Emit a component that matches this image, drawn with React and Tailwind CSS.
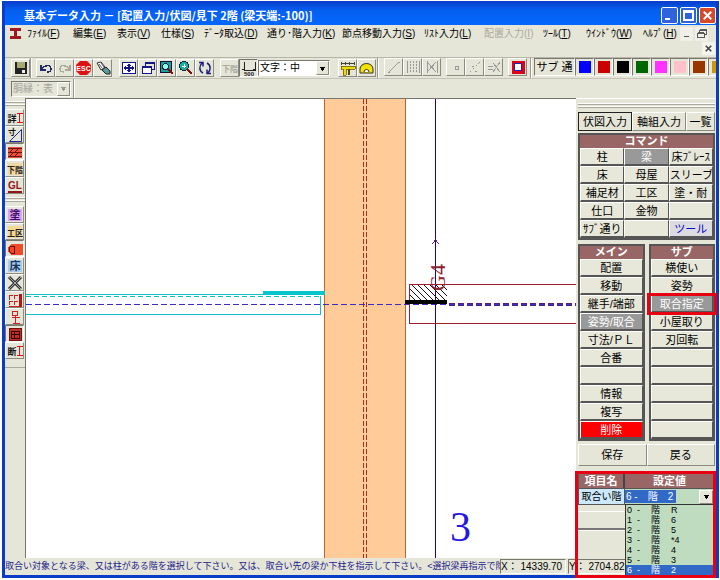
import { useState } from "react";
import clsx from "clsx";

const MENUS = [
  { label: "ﾌｧｲﾙ", hotkey: "F", width: "w-[46px]" },
  { label: "編集", hotkey: "E", width: "w-[44px]" },
  { label: "表示", hotkey: "V", width: "w-[44px]" },
  { label: "仕様", hotkey: "S", width: "w-[43px]" },
  { label: "ﾃﾞｰﾀ取込", hotkey: "D", width: "w-[63px]" },
  { label: "通り･階入力", hotkey: "K", width: "w-[75px]" },
  { label: "節点移動入力", hotkey: "S", width: "w-[82px]" },
  { label: "ﾘｽﾄ入力", hotkey: "L", width: "w-[60px]" },
  { label: "配置入力", hotkey: "I", width: "w-[59px]", disabled: true },
  { label: "ﾂｰﾙ", hotkey: "T", width: "w-[43px]" },
  { label: "ｳｲﾝﾄﾞｳ", hotkey: "W", width: "w-[57px]" },
  { label: "ﾍﾙﾌﾟ", hotkey: "H", width: "w-[43px]" },
];

const SWATCHES = [
  { name: "青", color: "bg-[#0000ff]" },
  { name: "赤", color: "bg-[#cc0000]" },
  { name: "黒", color: "bg-black" },
  { name: "緑", color: "bg-[#006600]" },
  { name: "紫", color: "bg-[#ff33ff]" },
  { name: "桃", color: "bg-[#ffc0cb]" },
  { name: "茶", color: "bg-[#993300]" },
  { name: "金", color: "bg-[#cc9900]" },
];

const COMMANDS = [
  "柱", "梁", "床ﾌﾞﾚｰｽ",
  "床", "母屋", "スリーブ",
  "補足材", "工区", "塗・耐",
  "仕口", "金物", "",
  "ｻﾌﾞ通り", "", "ツール",
];

const MAIN_ITEMS = ["配置", "移動", "継手/端部", "姿勢/取合", "寸法/ＰＬ", "合番", "", "情報", "複写", "削除"];
const SUB_ITEMS = ["横使い", "姿勢", "取合指定", "小屋取り", "刃回転", "", "", "", "", ""];

const FLOORS = ["R", "6", "5", "*4", "4", "3", "2"];

const RAISED = "border border-t-white border-l-white border-r-[#8a8a80] border-b-[#8a8a80]";
const SUNKEN = "border border-t-[#77776f] border-l-[#77776f] border-r-white border-b-white";

function Icon({ children, size = 16 }) {
  return (
    <svg width={size} height={size} viewBox="0 0 16 16" fill="none" shapeRendering="crispEdges" aria-hidden="true">
      {children}
    </svg>
  );
}

function ToolButton({ label, children, pressed, disabled }) {
  return (
    <button
      type="button"
      aria-label={label}
      disabled={disabled}
      className={clsx("flex h-[18px] w-[19px] shrink-0 items-center justify-center overflow-hidden", pressed ? SUNKEN : RAISED)}
    >
      {children}
    </button>
  );
}

function Separator() {
  return <div className="h-[20px] w-[2px] shrink-0 border-l border-[#9a9a90] border-r border-r-white" />;
}

function GlyphIcon({ text, color, fill, size = 11 }) {
  return (
    <Icon>
      {fill && <rect x="1" y="2" width="14" height="12" fill={fill} />}
      <text x="8" y="12" fontSize={size} fontWeight="700" textAnchor="middle" fill={color}>
        {text}
      </text>
    </Icon>
  );
}

function TitleBar() {
  return (
    <div className="flex h-6 shrink-0 items-center bg-linear-to-b from-[#0a3cc8] via-[#0560f0] via-40% to-[#0466ff] pl-[19px]">
      <h1 className="flex-1 whitespace-nowrap pt-1 font-['Noto_Sans_CJK_JP',sans-serif] text-[11px] font-bold leading-none text-white">
        基本データ入力 － [配置入力/伏図/見下 2階 (梁天端:-100)]
      </h1>
      <div className="flex gap-[2px] pt-1">
        <button type="button" aria-label="最小化" className="h-[17px] w-[17px] rounded-xs border border-white bg-[#2f62dd]">
          <Icon size={15}><path d="M3 11h6v2H3z" fill="#fff" /></Icon>
        </button>
        <button type="button" aria-label="最大化" className="h-[17px] w-[17px] rounded-xs border border-white bg-[#2f62dd]">
          <Icon size={15}><path d="M3 3h10v10H3zM3 4.5h10" stroke="#fff" strokeWidth="1.6" /></Icon>
        </button>
        <button type="button" aria-label="閉じる" className="h-[17px] w-[17px] rounded-xs border border-white bg-[#d8492a]">
          <svg width="15" height="15" viewBox="0 0 16 16" aria-hidden="true">
            <path d="M4 4l8 8M12 4l-8 8" stroke="#fff" strokeWidth="2" />
          </svg>
        </button>
      </div>
    </div>
  );
}

function MenuBar() {
  return (
    <div className="shrink-0 border-b border-[#b5b5a8]">
      <div className="flex h-[17px] items-center pl-1">
        <div className="w-[18px] shrink-0">
          <Icon size={13}>
            <path d="M1 1h14v4h-5v6h5v4H1v-4h5V5H1z" fill="#a01820" />
          </Icon>
        </div>
        <nav className="flex flex-1 overflow-hidden">
          {MENUS.map((menu) => (
            <button
              key={menu.label}
              type="button"
              disabled={menu.disabled}
              className={clsx("shrink-0 whitespace-nowrap text-left text-[10px] leading-[15px]", menu.width, menu.disabled && "text-[#aaaaa0]")}
            >
              {menu.label}(<u>{menu.hotkey}</u>)
            </button>
          ))}
        </nav>
        <div className="flex gap-[2px] pr-2">
          <button type="button" aria-label="子ウィンドウを最小化" className="flex h-[14px] w-[13px] items-center justify-center bg-[#f0f0e8]">
            <Icon size={12}><path d="M4 10h6v2H4z" fill="#555" /></Icon>
          </button>
          <button type="button" aria-label="元に戻す" className="flex h-[14px] w-[13px] items-center justify-center bg-[#f0f0e8]">
            <Icon size={12}><path d="M5 6V2h9v7h-3M5 3h9M2 6h9v7H2zM2 7h9" stroke="#555" strokeWidth="1.3" /></Icon>
          </button>
        </div>
      </div>
      <div className="flex h-[15px] justify-end pr-px">
        <button type="button" aria-label="子ウィンドウを閉じる" className="flex h-[13px] w-[13px] items-center justify-center bg-[#f4f4ee]">
          <svg width="11" height="11" viewBox="0 0 16 16" aria-hidden="true">
            <path d="M4 4l8 8M12 4l-8 8" stroke="#444" strokeWidth="2.4" />
          </svg>
        </button>
      </div>
    </div>
  );
}

function ToolBar() {
  const [size, setSize] = useState("中");

  return (
    <div className="flex h-[21px] shrink-0 items-center overflow-hidden border-b border-[#c4c4b8] pl-[6px]">
      <ToolButton label="保存">
        <Icon>
          <path d="M2 2h12v12H2z" fill="#222" />
          <path d="M4 2h8v6H4z" fill="#a7a776" />
          <path d="M9 10h3v3H9z" fill="#eee" />
        </Icon>
      </ToolButton>
      <Separator />
      <div className="ml-1 flex">
        <ToolButton label="元に戻す">
          <Icon><path d="M3 5v5h5M4 9c2-4 9-5 9 0 0 2-2 3-4 3" stroke="#222a66" strokeWidth="1.5" /></Icon>
        </ToolButton>
        <ToolButton label="やり直し" disabled>
          <Icon><path d="M13 5v5H8M12 9c-2-4-9-5-9 0 0 2 2 3 4 3" stroke="#aaa99c" strokeWidth="1.3" /></Icon>
        </ToolButton>
        <ToolButton label="ESC">
          <svg width="17" height="16" viewBox="0 0 17 16" aria-hidden="true">
            <path d="M5 1h7l4 4v6l-4 4H5l-4-4V5z" fill="#dd1111" />
            <text x="8.5" y="11" fontSize="7" fontWeight="700" textAnchor="middle" fill="#fff">ESC</text>
          </svg>
        </ToolButton>
        <ToolButton label="属性取得">
          <svg width="16" height="16" viewBox="0 0 16 16" fill="none" aria-hidden="true">
            <path d="M2 3l4-1 4 5-4 3z" fill="#fff" stroke="#333" />
            <path d="M4 4l3 4M6 3l3 4" stroke="#555" />
            <path d="M7 10l4-3 4 4v3h-4z" fill="#5a9a9a" stroke="#222" />
          </svg>
        </ToolButton>
      </div>
      <div className="ml-[7px] flex">
        <ToolButton label="全体表示">
          <Icon>
            <path d="M1.500 2.500h13v11h-13z" fill="#fff" stroke="#14148c" />
            <path d="M7 4h2v8H7zM3 7h10v2H3zM6 5h4v1H6zM6 10h4v1H6zM4 6h1v4H4zM11 6h1v4h-1z" fill="#14148c" />
          </Icon>
        </ToolButton>
        <ToolButton label="前画面">
          <Icon>
            <path d="M5.500 6V2.500h9v7H11M5 3.500h9" stroke="#14148c" />
            <path d="M2.500 6.500h9v7h-9z" fill="#fff" stroke="#14148c" />
            <path d="M2 7.500h10" stroke="#14148c" />
          </Icon>
        </ToolButton>
        <ToolButton label="窓拡大">
          <Icon>
            <path d="M1 1h11v11H1z" fill="#18a0a0" stroke="#113" />
            <circle cx="6.500" cy="6.500" r="3" fill="#8fe" stroke="#123" />
            <path d="M9 9l5 5" stroke="#7a1010" strokeWidth="2.4" />
          </Icon>
        </ToolButton>
        <ToolButton label="拡大">
          <Icon>
            <circle cx="6" cy="6" r="4.500" fill="#18b0a0" stroke="#123" />
            <path d="M4 6h4M6 4v4" stroke="#fff" />
            <path d="M9 9l5 5" stroke="#7a1010" strokeWidth="2.4" />
          </Icon>
        </ToolButton>
        <ToolButton label="再描画">
          <svg width="16" height="16" viewBox="0 0 16 16" fill="none" aria-hidden="true">
            <path d="M6 13c-4-2-4-7-1-10M2 2.500h4v4M10 3c4 2 4 7 1 10M14 13.500h-4v-4" stroke="#1c1c80" strokeWidth="1.500" />
          </svg>
        </ToolButton>
      </div>
      <div className="ml-[6px] flex">
        <ToolButton label="下階" disabled><GlyphIcon text="下階" color="#aaa99c" size={8} /></ToolButton>
        <ToolButton label="寸法文字" pressed>
          <Icon>
            <path d="M3 2v8h11V2M1 9h3M12 9h3" stroke="#222" />
            <text x="8" y="16" fontSize="6" fontWeight="700" textAnchor="middle" fill="#222">500</text>
          </Icon>
        </ToolButton>
      </div>
      <div className={clsx("relative h-[16px] w-[72px] shrink-0 bg-white", SUNKEN)}>
        <select
          aria-label="文字サイズ"
          value={size}
          onChange={(e) => setSize(e.target.value)}
          className="block h-[14px] w-full appearance-none pl-px text-[10px] leading-[14px]"
        >
          <option value="大">文字：大</option>
          <option value="中">文字：中</option>
          <option value="小">文字：小</option>
        </select>
        <span className={clsx("pointer-events-none absolute right-0 top-0 flex h-[14px] w-[13px] items-center justify-center bg-[#e6e6d8]", RAISED)}>
          <Icon size={9}><path d="M2 5h12l-6 7z" fill="#000" /></Icon>
        </span>
      </div>
      <div className="ml-2 flex">
        <ToolButton label="寸法">
          <Icon>
            <path d="M1 2v3M1 3h14M5 2v3M9 2v3M14 2v3" stroke="#443" />
            <path d="M1 6h14v3H6v6H3V9H1z" fill="#eedc00" stroke="#554c00" strokeWidth=".7" />
            <path d="M9 9v6" stroke="#554c00" strokeWidth="1.500" />
          </Icon>
        </ToolButton>
        <ToolButton label="角度">
          <svg width="17" height="16" viewBox="0 0 17 16" aria-hidden="true">
            <path d="M2 13V9a6.500 5.500 0 0 1 13 0v4z" fill="#f2e200" stroke="#333" />
            <path d="M6 12a2.500 2.500 0 0 1 5 0" fill="#fff" stroke="#333" />
          </svg>
        </ToolButton>
      </div>
      <div className="ml-px flex gap-[5px]">
        <Separator />
        <div className="flex">
          <ToolButton label="線" disabled><Icon><path d="M3 13L13 3M2 13h2M12 3h2" stroke="#999" /></Icon></ToolButton>
          <ToolButton label="平行線" disabled>
            <Icon><path d="M2 2v12M14 2v12" stroke="#999" /><path d="M5 2v12M8 2v12M11 2v12" stroke="#999" strokeDasharray="2 1" /></Icon>
          </ToolButton>
          <ToolButton label="交差" disabled><Icon><path d="M3 2v12M13 2v12M4 12l8-9M4 4l8 9" stroke="#999" /></Icon></ToolButton>
        </div>
        <div className="flex">
          <ToolButton label="点" disabled><Icon><path d="M7 7h3v3H7z" stroke="#999" /></Icon></ToolButton>
          <ToolButton label="線上点" disabled><Icon><path d="M3 13L13 3M8 12h3M5 7h2" stroke="#999" strokeDasharray="2 2" /></Icon></ToolButton>
          <ToolButton label="交点" disabled><Icon><path d="M2 7h5M2 10h5M7 4l7 9M14 3l-7 10" stroke="#999" /></Icon></ToolButton>
        </div>
        <ToolButton label="枠">
          <Icon><path d="M3 3h10v10H3z" fill="#fff" stroke="#e00018" strokeWidth="3" /><path d="M4.500 4.500h7v7h-7z" stroke="#2222aa" /></Icon>
        </ToolButton>
      </div>
      <div className="ml-[3px] flex shrink-0">
        <Separator />
        <button type="button" className={clsx("ml-[2px] h-[18px] w-[41px] whitespace-nowrap text-[11px] leading-[15px]", SUNKEN)}>サブ 通</button>
        {SWATCHES.map((swatch) => (
          <ToolButton key={swatch.name} label={swatch.name} pressed>
            <span className={clsx("h-3 w-3", swatch.color)} />
          </ToolButton>
        ))}
      </div>
    </div>
  );
}

function SubToolBar() {
  return (
    <div className="flex h-[19px] shrink-0 items-center pl-[6px]">
      <div className={clsx("relative h-[16px] w-[60px]", SUNKEN)}>
        <select disabled aria-label="胴縁" className="block h-[14px] w-full appearance-none pl-px text-[10px] leading-[14px] text-[#a3a398] opacity-100">
          <option>胴縁：表</option>
        </select>
        <span className={clsx("pointer-events-none absolute right-0 top-0 flex h-[14px] w-[13px] items-center justify-center bg-[#e6e6d8]", RAISED)}>
          <Icon size={9}><path d="M2 5h12l-6 7z" fill="#999" /></Icon>
        </span>
      </div>
      <div className="ml-[2px]"><Separator /></div>
    </div>
  );
}

function Grip({ className }) {
  return (
    <div className={clsx("flex flex-col gap-px", className)}>
      <div className="h-[2px] border-t border-b border-t-white border-b-[#a8a89c]" />
      <div className="h-[2px] border-t border-b border-t-white border-b-[#a8a89c]" />
    </div>
  );
}

function SideButton({ label, pressed, children }) {
  return (
    <button
      type="button"
      aria-label={label}
      className={clsx("flex h-[17px] w-[19px] shrink-0 items-center justify-center", pressed ? SUNKEN : RAISED)}
    >
      {children}
    </button>
  );
}

function RedBeam() {
  return <path d="M9.500 3.500h6M9.500 12.500h6M12.500 3v10" stroke="#e01010" />;
}

function SideBar() {
  return (
    <aside className="flex w-5 shrink-0 flex-col overflow-hidden">
      <Grip className="py-[3px]" />
      <SideButton label="詳細"><Icon><text x="5" y="12" fontSize="9" fontWeight="700" textAnchor="middle" fill="#111">詳</text><RedBeam /></Icon></SideButton>
      <SideButton label="寸法">
        <svg width="16" height="16" viewBox="0 0 16 16" fill="none" aria-hidden="true">
          <text x="5" y="8" fontSize="8" fontWeight="700" textAnchor="middle" fill="#111">寸</text>
          <path d="M2.500 14.500h12v-12z" stroke="#1a2a9c" />
        </svg>
      </SideButton>
      <SideButton label="壁" pressed>
        <Icon><path d="M1 3h14v11H1z" fill="#e2543c" /><path d="M1 4h14M1 8h14M1 12h14M3 8l3-3M8 8l3-3M3 12l3-3M8 12l3-3" stroke="#701010" /></Icon>
      </SideButton>
      <SideButton label="下階"><GlyphIcon text="下階" color="#222" fill="#f0d8a0" size={8} /></SideButton>
      <SideButton label="GL">
        <Icon><text x="8" y="11" fontSize="10" fontWeight="700" textAnchor="middle" fill="#951515">GL</text><path d="M1 14h14" stroke="#951515" strokeWidth="2" /></Icon>
      </SideButton>
      <Grip className="pb-[4px] pt-[3px]" />
      <SideButton label="塗装"><GlyphIcon text="塗" color="#301060" fill="#e0a0f0" /></SideButton>
      <SideButton label="工区"><GlyphIcon text="工区" color="#222" fill="#f4d898" size={8} /></SideButton>
      <SideButton label="継手" pressed>
        <Icon><path d="M4 3h12v11H4l-3-3V6z" fill="#f04a28" /><path d="M7 5H4L2 7v3l2 2h3zM7 5v8" stroke="#6a1008" /></Icon>
      </SideButton>
      <SideButton label="床"><GlyphIcon text="床" color="#18335c" fill="#a8cce8" /></SideButton>
      <SideButton label="ブレース">
        <svg width="16" height="16" viewBox="0 0 16 16" aria-hidden="true">
          <path d="M2 2l12 12M14 2L2 14" stroke="#333" strokeWidth="3" />
          <path d="M2 2l12 12M14 2L2 14" stroke="#aaa" />
        </svg>
      </SideButton>
      <SideButton label="梁継手">
        <Icon>
          <path d="M6 3.500H2.500v4M2 9.500h4M2.500 9v4M7 3.500h3.500M7.500 3v4M7 9.500h3.500M7.500 9v4M2 14.500h10" stroke="#cc2020" />
          <path d="M12 2h3v13h-3z" fill="#b01818" />
        </Icon>
      </SideButton>
      <SideButton label="柱脚">
        <Icon><path d="M5.500 2.500h5v4h-5zM8.500 6v8M4.500 8.500h8M5.500 14.500h7" stroke="#cc2020" /></Icon>
      </SideButton>
      <SideButton label="部材" pressed>
        <Icon><path d="M2 2h12v12H2z" fill="#c03020" stroke="#701010" /><path d="M4 5h8v7H4zM4 8h8M7 5v7" stroke="#300" /></Icon>
      </SideButton>
      <SideButton label="断面"><Icon><text x="5" y="12" fontSize="9" fontWeight="700" textAnchor="middle" fill="#111">断</text><RedBeam /></Icon></SideButton>
      <div className="mt-2 border-t border-[#a8a89c]" />
    </aside>
  );
}

function DrawingCanvas() {
  return (
    <main className="min-w-0 flex-1 overflow-hidden border-l border-t border-[#77776f] bg-white">
      <svg className="block h-full w-full" viewBox="26 99 550 459" preserveAspectRatio="xMidYMid slice" fill="none" shapeRendering="crispEdges">
        <defs>
          <pattern id="hatch" width="6" height="6" patternUnits="userSpaceOnUse" patternTransform="translate(1 0)">
            <path d="M-1-1l8 8" stroke="#111" strokeWidth="1" />
          </pattern>
        </defs>

        {/* vertical girder */}
        <rect x="324" y="99" width="82" height="459" fill="#ffcc99" />
        <path d="M324.500 99v459M405.500 99v459" stroke="#c0642c" />
        <path d="M363.500 99v459M366.500 99v459" stroke="#993322" strokeDasharray="5 2" />

        {/* left beam */}
        <path d="M26 294.500h298M26 314.500h294M320.500 296v19" stroke="#18bcc4" />
        <path d="M26 296.500h294" stroke="#18bcc4" strokeDasharray="5 3" />
        <path d="M263 293h62" stroke="#08c4cc" strokeWidth="4" />

        {/* grid lines */}
        <path d="M26 304.500h550" stroke="#3c2cc0" strokeDasharray="6 3" />
        <path d="M435.500 99v459" stroke="#1000c8" />
        <path d="M432 244l3.500-4 3.500 4" stroke="#702060" />

        {/* right beam */}
        <rect x="409" y="285" width="38" height="15" fill="url(#hatch)" />
        <path d="M576 284.500H409.500v39H576" stroke="#9c2030" />
        <path d="M405 302h42" stroke="#000" strokeWidth="4" />
        <path d="M449 303.500h127M449 305.500h127" stroke="#50207c" strokeDasharray="6 3" />

        <text transform="translate(445 291) rotate(-90)" fontSize="22" fill="#8c2430" className="font-['Liberation_Serif',serif]">
          G4
        </text>
        <text x="450" y="541" fontSize="42" fill="#2418e0" className="font-['Liberation_Serif',serif]">
          3
        </text>
      </svg>
    </main>
  );
}

function PanelHeader({ children }) {
  return (
    <h2 className="h-[13px] bg-[#996666] text-center text-[11px] font-bold leading-[12px] text-white">{children}</h2>
  );
}

function PanelCell({ label, active, danger, link, highlight }) {
  return (
    <div className="relative">
      <button
        type="button"
        className={clsx(
          "block h-[18px] w-full overflow-hidden whitespace-nowrap border border-b-2 border-l-white border-r-[#555] border-t-white border-b-[#555] text-center text-[11px] leading-[14px]",
          active && "bg-[#999999] text-white",
          danger && "bg-[#ff0000] text-white",
          link && "bg-[#dcdce0] text-[#0000cc]",
          !active && !danger && !link && "bg-[#e8e8da]"
        )}
      >
        {label}
      </button>
      {highlight && <div className="pointer-events-none absolute -inset-x-[4px] -inset-y-[2px] z-10 border-3 border-[#e60012]" />}
    </div>
  );
}

function SettingsTable() {
  return (
    <div className="flex flex-1 flex-col">
      <table className="w-full table-fixed border-separate border-spacing-0 border border-[#555] text-[11px]">
        <thead>
          <tr className="bg-[#996666] text-white">
            <th className="h-[14px] w-[46px] border-r-2 border-[#444] p-0 leading-[13px]">項目名</th>
            <th className="p-0 leading-[13px]">設定値</th>
          </tr>
        </thead>
        <tbody>
          <tr>
            <td className="h-[16px] whitespace-nowrap border-r border-t border-[#555] bg-[#cce8fa] p-0 text-center leading-[15px]">
              <label htmlFor="joint-floor" className="text-[10px]">取合い階</label>
            </td>
            <td className="border-t border-[#555] bg-[#c0dcc0] p-0">
              <div className="relative flex h-[15px] items-center justify-between">
                <input
                  id="joint-floor"
                  role="combobox"
                  aria-expanded="true"
                  aria-controls="floor-list"
                  readOnly
                  value="6 -　階　2"
                  className="h-[13px] w-[51px] bg-[#3169c6] pl-px text-[10px] leading-[13px] text-white"
                />
                <button type="button" aria-label="一覧を開く" className={clsx("mr-px flex h-[14px] w-[14px] items-center justify-center bg-[#e8e8da]", RAISED)}>
                  <Icon size={9}><path d="M2 5h12l-6 7z" fill="#000" /></Icon>
                </button>
                <ul id="floor-list" role="listbox" className="absolute left-0 right-0 top-[15px] z-20 border border-[#333] bg-[#c0dcc0] text-[9px]">
                  {FLOORS.map((floor, i) => (
                    <li
                      key={floor}
                      role="option"
                      aria-selected={floor === "2"}
                      className={clsx("flex h-[10px] pl-px leading-[10px]", floor === "2" && "bg-[#3169c6] text-white")}
                    >
                      <span className="w-[10px]">{i}</span>
                      <span className="w-[14px]">-</span>
                      <span className="w-[20px]">階</span>
                      <span>{floor}</span>
                    </li>
                  ))}
                </ul>
              </div>
            </td>
          </tr>
        </tbody>
      </table>
      <div className="mt-[6px] h-[19px] border-b-2 border-t border-b-[#777] border-t-white" />
      <div className="flex-1 border-t border-white" />
    </div>
  );
}

function CommandPanel() {
  return (
    <aside className="flex w-[140px] shrink-0 flex-col border-t border-white pl-[2px] pr-px">
      <Grip className="py-[4px]" />
      <div className="flex h-[19px]">
        <button type="button" className="w-[54px] whitespace-nowrap border border-[#222] text-[11px] leading-[16px]">伏図入力</button>
        <button type="button" className={clsx("w-[54px] whitespace-nowrap text-[11px] leading-[16px]", RAISED)}>軸組入力</button>
        <button type="button" className={clsx("flex-1 whitespace-nowrap text-[11px] leading-[16px]", RAISED)}>一覧</button>
      </div>

      <section className="mt-[2px] border-2 border-[#555]">
        <PanelHeader>コマンド</PanelHeader>
        <div className="grid grid-cols-3">
          {COMMANDS.map((label, i) => (
            <PanelCell key={i} label={label} active={label === "梁"} link={label === "ツール"} />
          ))}
        </div>
      </section>

      <div className="mt-[4px] flex gap-[4px]">
        <section className="flex-1 border-2 border-[#555]">
          <PanelHeader>メイン</PanelHeader>
          {MAIN_ITEMS.map((label, i) => (
            <PanelCell key={i} label={label} active={label === "姿勢/取合"} danger={label === "削除"} />
          ))}
        </section>
        <section className="flex-1 border-2 border-[#555]">
          <PanelHeader>サブ</PanelHeader>
          {SUB_ITEMS.map((label, i) => (
            <PanelCell key={i} label={label} active={label === "取合指定"} highlight={label === "取合指定"} />
          ))}
        </section>
      </div>

      <div className="mb-[7px] mt-[3px] flex h-[22px]">
        <button type="button" className={clsx("flex-1 text-[11px] leading-none", RAISED)}>保存</button>
        <button type="button" className={clsx("flex-1 text-[11px] leading-none", RAISED)}>戻る</button>
      </div>

      <SettingsTable />
    </aside>
  );
}

function StatusBar() {
  return (
    <footer className="flex h-[17px] shrink-0 items-center text-[10px]">
      <p className="min-w-0 flex-1 overflow-hidden whitespace-nowrap text-[9px] leading-[15px] text-[#1c1c8c]">
        取合い対象となる梁、又は柱がある階を選択して下さい。又は、取合い先の梁か下柱を指示して下さい。&lt;選択梁再指示で除
      </p>
      <p className={clsx("h-[15px] w-[66px] whitespace-nowrap leading-[13px]", SUNKEN)}>X： 14339.70</p>
      <p className={clsx("ml-[2px] h-[15px] w-[148px] whitespace-nowrap leading-[13px]", SUNKEN)}>Y： 2704.82</p>
    </footer>
  );
}

export default function App() {
  return (
    <div className="h-screen bg-white pb-[2px] pl-[2px] pr-px pt-px font-['Liberation_Sans','Noto_Sans_CJK_JP',sans-serif] text-black">
      <div className="relative flex h-full flex-col border-x-3 border-b-3 border-[#0a3cc8] bg-[#e6e6d8]">
        <TitleBar />
        <MenuBar />
        <ToolBar />
        <SubToolBar />
        <div className="flex min-h-0 flex-1">
          <SideBar />
          <DrawingCanvas />
          <CommandPanel />
        </div>
        <StatusBar />
        <div className="pointer-events-none absolute -bottom-[3px] right-0 z-30 h-[107px] w-[141px] border-3 border-[#e60012]" />
      </div>
    </div>
  );
}
